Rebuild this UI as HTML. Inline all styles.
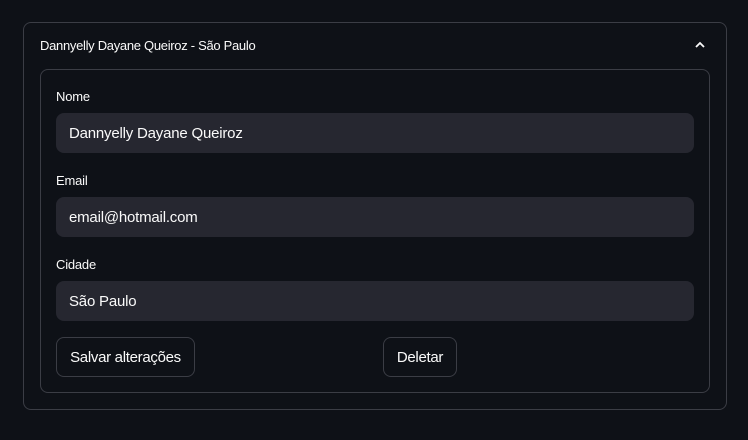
<!DOCTYPE html>
<html><head><meta charset="utf-8"><style>
*{box-sizing:border-box;margin:0;padding:0}
body{width:748px;height:440px;background:#0e1117;font-family:"Liberation Sans",sans-serif;color:#fafafa;position:relative;overflow:hidden}
.abs{position:absolute}
.outer{left:23px;top:22px;width:704px;height:388px;border:1px solid #3b3d45;border-radius:8px}
.inner{left:40px;top:69px;width:670px;height:324px;border:1px solid #3b3d45;border-radius:8px}
.hdr{left:40px;top:38px;font-size:13px;letter-spacing:-0.3px}
.lbl{left:56px;font-size:13px;letter-spacing:-0.2px}
.inp{left:56px;width:638px;height:40px;background:#262730;border-radius:8px;font-size:15px;padding-left:13px;line-height:42px;letter-spacing:-0.2px}
.btn{top:337px;height:40px;border:1px solid #3b3d45;border-radius:8px;font-size:15px;line-height:40px;text-align:center;letter-spacing:-0.3px}
</style></head><body>
<div class="abs outer"></div>
<div class="abs hdr">Dannyelly Dayane Queiroz - São Paulo</div>
<svg class="abs" style="left:694px;top:40px" width="12" height="10" viewBox="0 0 12 10"><path d="M2 7 L6 3 L10 7" stroke="#fafafa" stroke-width="1.8" fill="none"/></svg>
<div class="abs inner"></div>
<div class="abs lbl" style="top:89px">Nome</div>
<div class="abs inp" style="top:113px">Dannyelly Dayane Queiroz</div>
<div class="abs lbl" style="top:173px">Email</div>
<div class="abs inp" style="top:197px">email@hotmail.com</div>
<div class="abs lbl" style="top:257px">Cidade</div>
<div class="abs inp" style="top:281px">São Paulo</div>
<div class="abs btn" style="left:56px;width:139px">Salvar alterações</div>
<div class="abs btn" style="left:383px;width:74px">Deletar</div>
</body></html>
